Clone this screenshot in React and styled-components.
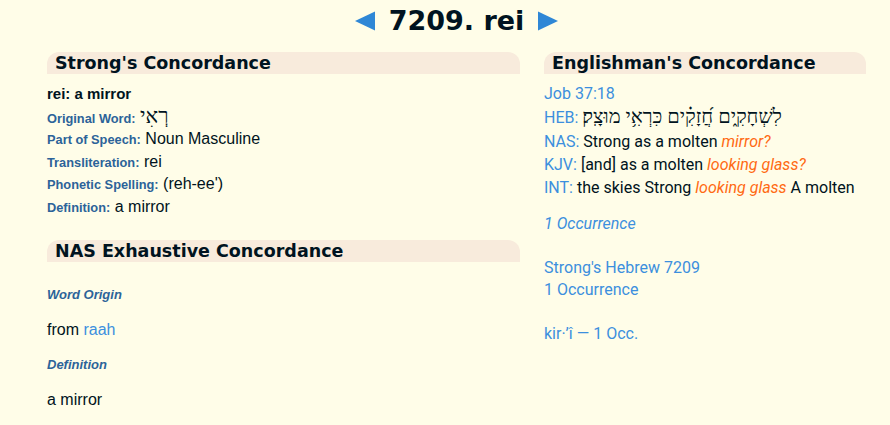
import React from "react";
import styled, { createGlobalStyle } from "styled-components";

const GlobalStyle = createGlobalStyle`
  html, body {
    margin: 0;
    padding: 0;
    background: #fffde8;
  }
  body {
    font-family: "Liberation Sans", Arial, sans-serif;
    color: #001320;
  }
`;

const Page = styled.div`
  width: 819px;
  min-height: 425px;
  padding-left: 47px;
  background: #fffde8;
`;

const TitleRow = styled.div`
  height: 42px;
  display: flex;
  align-items: center;
  justify-content: center;
  gap: 14px;
  margin-bottom: 10px;
`;

const Title = styled.h1`
  margin: 0;
  font-family: "DejaVu Sans", Verdana, sans-serif;
  font-weight: bold;
  font-size: 27px;
  line-height: 42px;
  color: #001320;
`;

const ArrowSvg = styled.svg`
  width: 20px;
  height: 20px;
  display: block;
  fill: #2f87d6;
`;

const Arrow = ({ dir }) => (
  <ArrowSvg viewBox="0 0 20 20">
    {dir === "left" ? (
      <polygon points="0,10 20,0.5 20,19.5" />
    ) : (
      <polygon points="20,10 0,0.5 0,19.5" />
    )}
  </ArrowSvg>
);

const Columns = styled.div`
  display: grid;
  grid-template-columns: 473px 322px;
  column-gap: 24px;
  align-items: start;
`;

const Column = styled.div`
  display: flex;
  flex-direction: column;
`;

const SectionBar = styled.h2`
  margin: ${(p) => (p.$spaced ? "22px" : "0")} 0 0 0;
  height: 22px;
  padding-left: 8px;
  background: #f8ebdc;
  border-radius: 12px 12px 0 0;
  font-family: "DejaVu Sans", Verdana, sans-serif;
  font-weight: bold;
  font-size: 17.5px;
  line-height: 22px;
  color: #001320;
  white-space: nowrap;
`;

const InfoList = styled.div`
  margin-top: 9px;
  display: flex;
  flex-direction: column;
`;

const Headline = styled.div`
  font-weight: bold;
  font-size: 15px;
  line-height: 22.5px;
`;

const InfoRow = styled.div`
  font-size: 16px;
  line-height: 22.5px;
  height: 22.5px;
  white-space: nowrap;
`;

const Label = styled.span`
  font-weight: bold;
  font-size: 12.8px;
  line-height: 1;
  color: #2c6399;
`;

const Hebrew = styled.span`
  font-family: "Liberation Serif", "DejaVu Sans", serif;
  font-size: ${(p) => p.$size || "21px"};
  line-height: 1;
  color: #001320;
`;

const NasBlock = styled.div`
  padding-top: 23px;
  display: flex;
  flex-direction: column;
  gap: 15px;
`;

const SubHead = styled.div`
  font-weight: bold;
  font-style: italic;
  font-size: 13px;
  line-height: 20px;
  color: #2c6399;
`;

const Para = styled.div`
  font-size: 16px;
  line-height: 20px;
`;

const Link = styled.a`
  color: #3c8fde;
  text-decoration: none;
`;

const VerseBlock = styled.div`
  margin-top: 8px;
  display: flex;
  flex-direction: column;
  font-family: Roboto, "Liberation Sans", sans-serif;
  font-size: 16px;
`;

const VerseLine = styled.div`
  line-height: ${(p) => (p.$tall ? "25px" : "23px")};
  height: ${(p) => (p.$tall ? "25px" : "23px")};
  white-space: nowrap;
`;

const Tag = styled.span`
  color: #3c8fde;
`;

const Em = styled.i`
  color: #ff6a13;
`;

const LinkLine = styled.div`
  font-family: Roboto, "Liberation Sans", sans-serif;
  font-size: 16px;
  line-height: 22px;
  color: #3c8fde;
  font-style: ${(p) => (p.$italic ? "italic" : "normal")};
  margin-top: ${(p) => p.$mt || 0}px;
`;

export default function App() {
  return (
    <Page>
      <GlobalStyle />
      <TitleRow>
        <Arrow dir="left" />
        <Title>7209. rei</Title>
        <Arrow dir="right" />
      </TitleRow>
      <Columns>
        <Column>
          <SectionBar>Strong's Concordance</SectionBar>
          <InfoList>
            <Headline>rei: a mirror</Headline>
            <InfoRow>
              <Label>Original Word:</Label> <Hebrew>רְאִי</Hebrew>
            </InfoRow>
            <InfoRow>
              <Label>Part of Speech:</Label> Noun Masculine
            </InfoRow>
            <InfoRow>
              <Label>Transliteration:</Label> rei
            </InfoRow>
            <InfoRow>
              <Label>Phonetic Spelling:</Label> (reh-ee')
            </InfoRow>
            <InfoRow>
              <Label>Definition:</Label> a mirror
            </InfoRow>
          </InfoList>
          <SectionBar $spaced>NAS Exhaustive Concordance</SectionBar>
          <NasBlock>
            <SubHead>Word Origin</SubHead>
            <Para>
              from <Link href="#">raah</Link>
            </Para>
            <SubHead>Definition</SubHead>
            <Para>a mirror</Para>
          </NasBlock>
        </Column>
        <Column>
          <SectionBar>Englishman's Concordance</SectionBar>
          <VerseBlock>
            <VerseLine>
              <Tag>Job 37:18</Tag>
            </VerseLine>
            <VerseLine $tall>
              <Tag>HEB:</Tag>{" "}
              <Hebrew $size="20px">לִשְׁחָקִ֑ים חֲ֝זָקִ֗ים כִּרְאִ֥י מוּצָֽק׃</Hebrew>
            </VerseLine>
            <VerseLine>
              <Tag>NAS:</Tag> Strong as a molten <Em>mirror?</Em>
            </VerseLine>
            <VerseLine>
              <Tag>KJV:</Tag> [and] as a molten <Em>looking glass?</Em>
            </VerseLine>
            <VerseLine>
              <Tag>INT:</Tag> the skies Strong <Em>looking glass</Em> A molten
            </VerseLine>
          </VerseBlock>
          <LinkLine $italic $mt={14}>1 Occurrence</LinkLine>
          <LinkLine $mt={22}>Strong's Hebrew 7209</LinkLine>
          <LinkLine>1 Occurrence</LinkLine>
          <LinkLine $mt={22}>kir·’î — 1 Occ.</LinkLine>
        </Column>
      </Columns>
    </Page>
  );
}
